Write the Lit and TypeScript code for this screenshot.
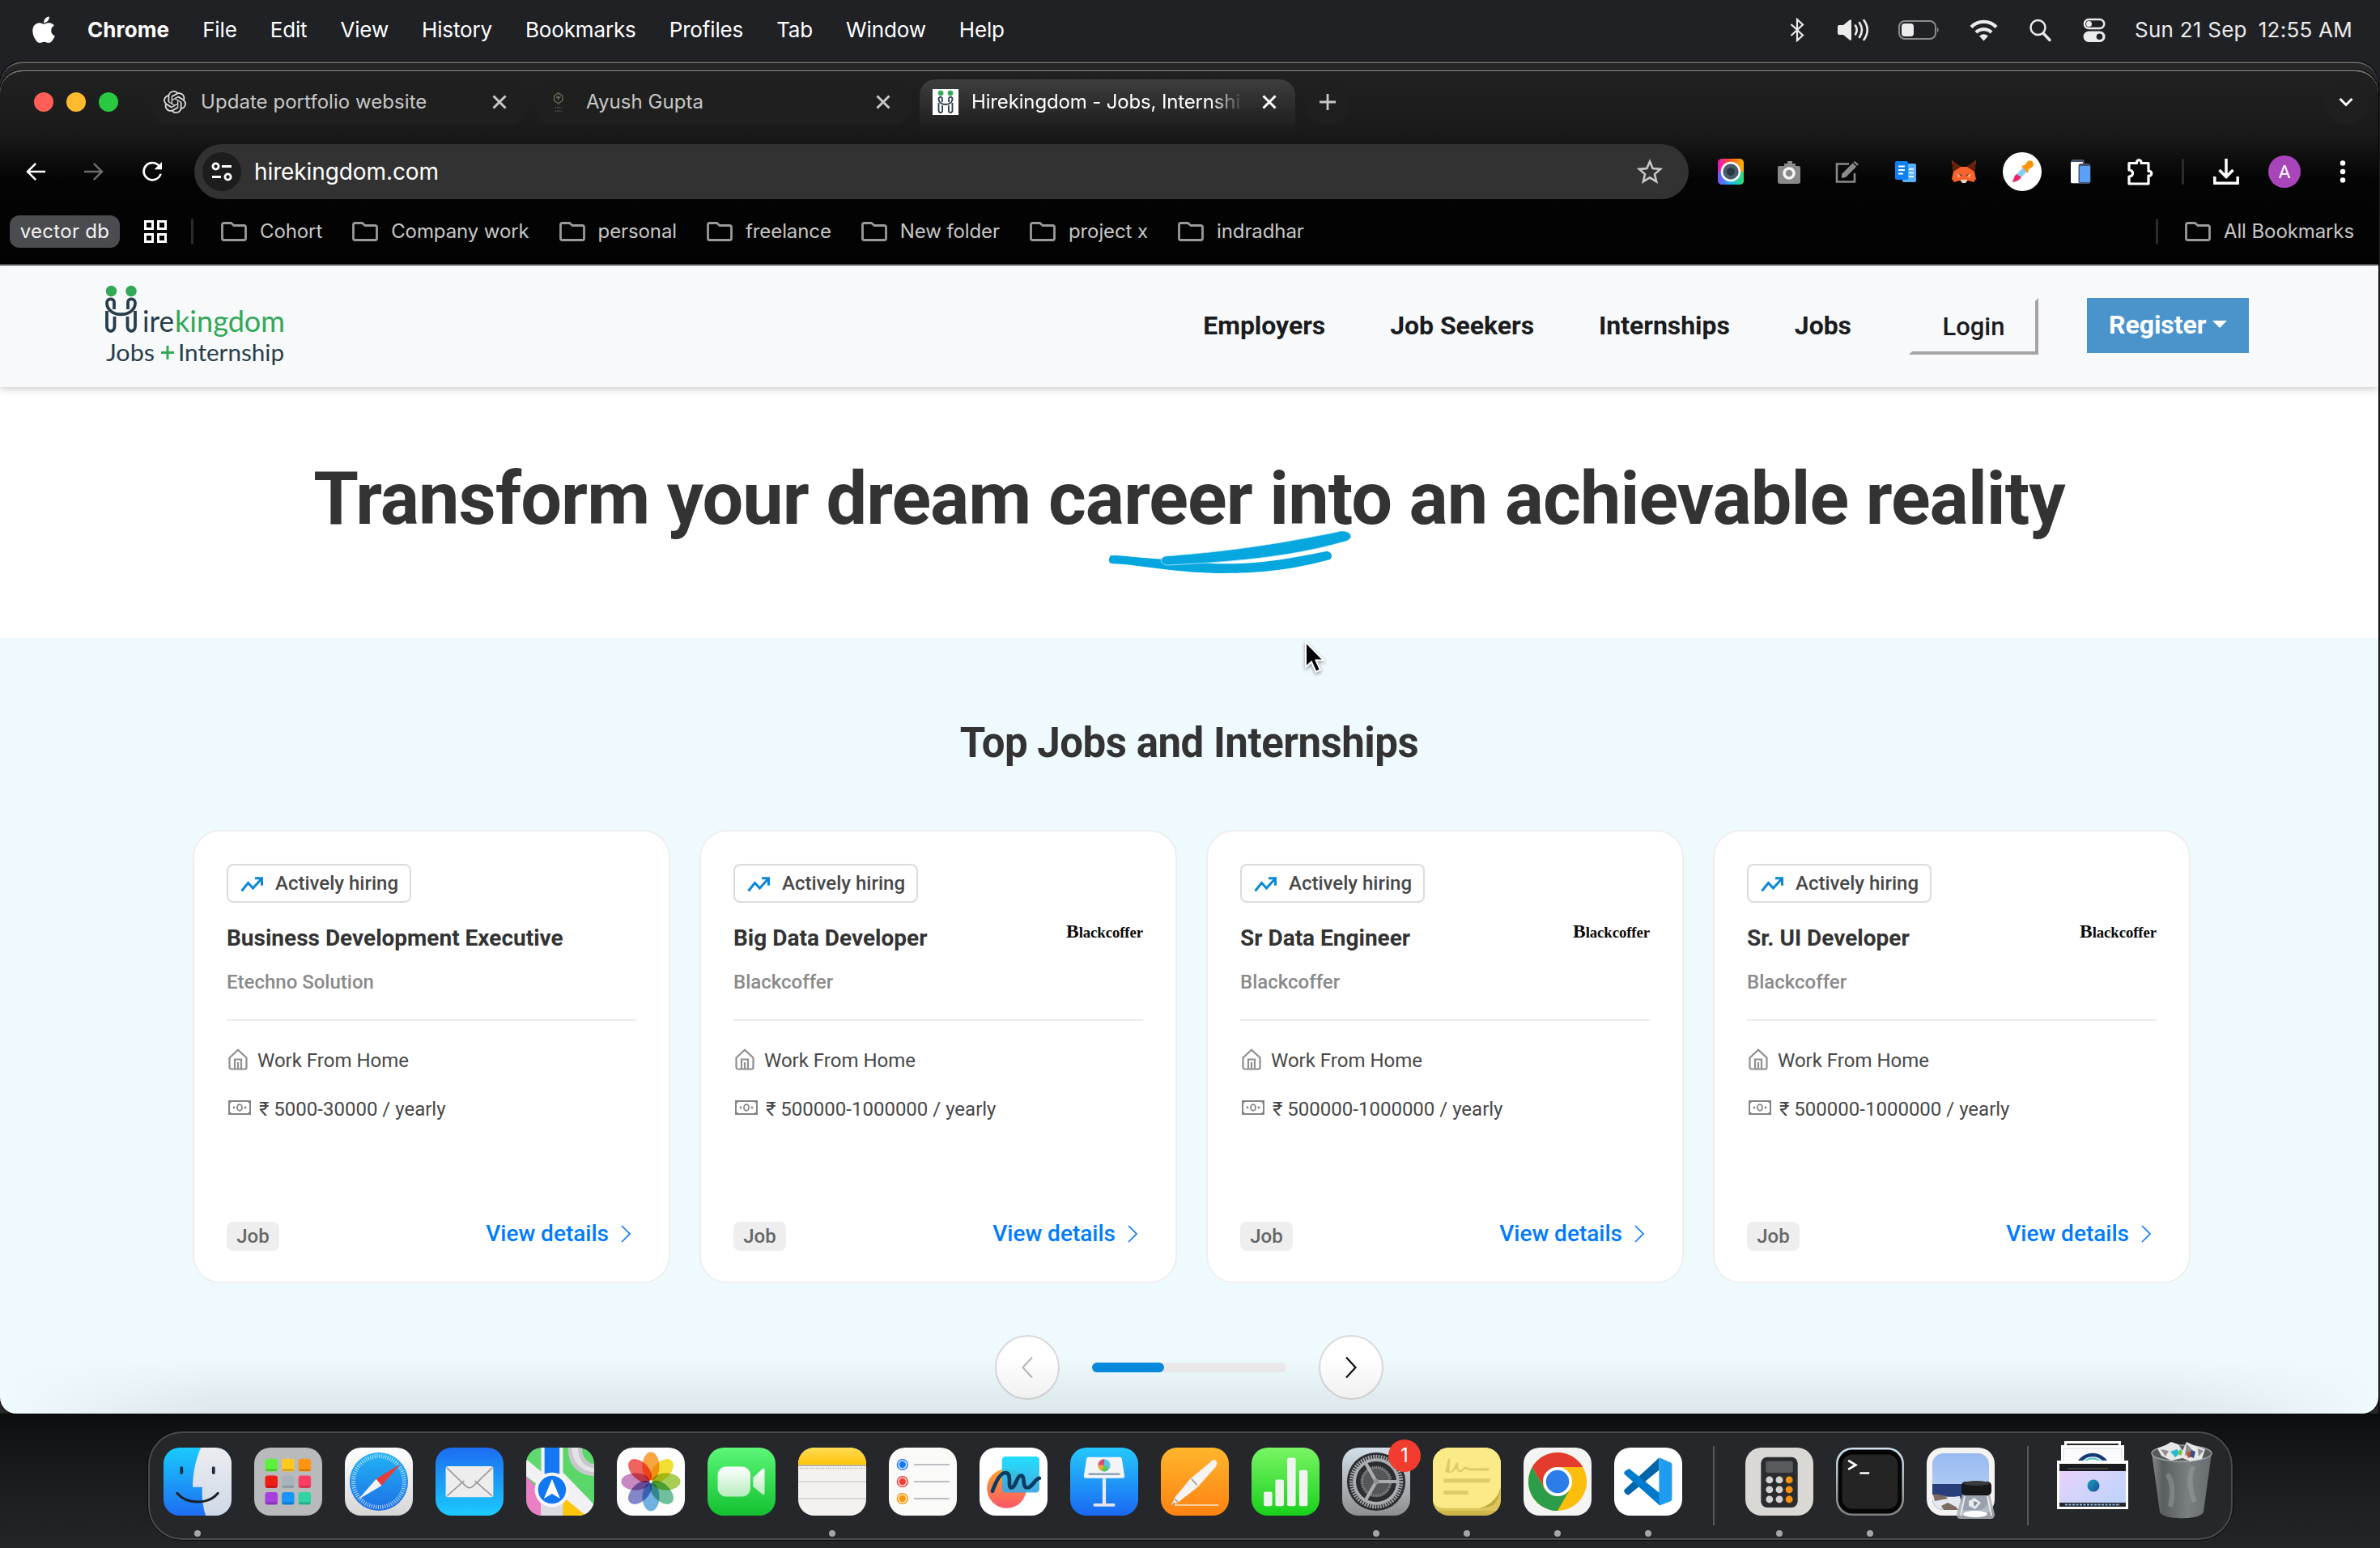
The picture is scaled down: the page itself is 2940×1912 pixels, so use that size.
import { LitElement, html, svg, css, nothing } from "lit";
import { customElement, property } from "lit/decorators.js";

const folder = html`<svg class="folder" viewBox="0 0 32 24"><path d="M1.5 4V20.5a2 2 0 0 0 2 2h25a2 2 0 0 0 2-2V6.500a2 2 0 0 0-2-2H16L12.500 1.500h-9a2 2 0 0 0-2 2z" fill="none" stroke="#9a9a9a" stroke-width="2.800"/></svg>`;
const closeX = (c: string) => html`<svg class="close" viewBox="0 0 18 18"><path d="M1.500 1.500 16.500 16.500M16.500 1.500 1.500 16.500" stroke=${c} stroke-width="3" fill="none"/></svg>`;

const hMark = svg`
  <circle cx="7.500" cy="6.500" r="6.800" fill="#33a857"/><circle cx="32" cy="6.500" r="6.800" fill="#33a857"/>
  <g fill="none" stroke="#263e4c" stroke-width="3.800" stroke-linecap="butt">
    <path d="M11 29V20c0-5-9-5-9 1 0 19 35 19 35 0 0-6-9-6-9-1v9"/>
    <path d="M2 31v19c0 8 9.500 8 9.500 0V38M37 31v19c0 8-9.500 8-9.500 0V38"/>
  </g>`;

/* Application icons of the dock, each on a 100 x 100 grid. */
const appIcons: Record<string, unknown> = {
  finder: svg`
    <defs><linearGradient id="fi" x2="0" y2="1"><stop stop-color="#19cbfd"/><stop offset="1" stop-color="#1e6df2"/></linearGradient>
    <linearGradient id="fj" x2="0" y2="1"><stop stop-color="#ececf0"/><stop offset="1" stop-color="#cfd9e6"/></linearGradient></defs>
    <rect width="100" height="100" fill="url(#fi)"/>
    <path d="M55 0C47 18 43 38 43 58h14c-1 14 1 30 5 42h38V0z" fill="url(#fj)"/>
    <path d="M26.500 30v7M73.500 30v7" stroke="#1d2b3c" stroke-width="4.500" stroke-linecap="round"/>
    <path d="M20 67c14 17 46 17 60 0" fill="none" stroke="#1c2026" stroke-width="3.500" stroke-linecap="round"/>`,
  launchpad: svg`
    <rect width="100" height="100" fill="#b9babc"/>
    ${[["#5df03f", "#ffc91f", "#ff9511"], ["#ee1d16", "#a8b4bb", "#ff3e66"], ["#a840dd", "#1896fb", "#2fd3a4"]].map((r, j) =>
      r.map((c, i) => svg`<rect x=${16 + i * 24.500} y=${16.500 + j * 24.500} width="18.500" height="18.500" rx="4" fill=${c}/>
      <path d="M${17 + i * 24.500} ${33 + j * 24.500}h16.500" stroke="#000" stroke-opacity=".18" stroke-width="3"/>`))}`,
  safari: svg`
    <defs><linearGradient id="sa" x2="0" y2="1"><stop stop-color="#22b4f5"/><stop offset="1" stop-color="#1d70e6"/></linearGradient>
    <linearGradient id="sb" x2="0" y2="1"><stop stop-color="#fff"/><stop offset="1" stop-color="#d6d6d6"/></linearGradient></defs>
    <rect width="100" height="100" fill="url(#sb)"/><circle cx="50" cy="50" r="43" fill="url(#sa)"/>
    <circle cx="50" cy="50" r="37.500" fill="none" stroke="#fff" stroke-opacity=".75" stroke-width="6" stroke-dasharray="1.100 2.170"/>
    <path d="M82 24 54 56 46 46z" fill="#e83b36"/><path d="M20 76 46 46 54 56z" fill="#f4f4f4"/>`,
  mail: svg`
    <defs><linearGradient id="ma" x2="0" y2="1"><stop stop-color="#1d6df2"/><stop offset="1" stop-color="#1bcbfd"/></linearGradient></defs>
    <rect width="100" height="100" fill="url(#ma)"/>
    <rect x="15" y="27.500" width="70" height="45.500" rx="4" fill="#ededed"/>
    <path d="M17 71 42 49M83 71 58 49M16.500 29.500 44 56c4 4 8 4 12 0L83.500 29.500" fill="none" stroke="#9b9b9b" stroke-width="2"/>`,
  maps: svg`
    <rect width="100" height="100" fill="#5bd769"/>
    <path d="M0 0h26v45L0 16z" fill="#5fd96f"/><path d="M62 0c-2 24 14 42 40 42V24C90 24 82 14 82 0z" fill="#c8c8cc"/>
    <path d="M67 0c0 20 14 36 35 36V30C86 30 76 18 76 0z" fill="#e4e4e8"/>
    <path d="M0 17 100 100H76L0 42z" fill="#f1f1f3"/><path d="M50 32 104 88v14H90L48 60z" fill="#f1f1f3"/><path d="M0 42 54 100H0z" fill="#ea7fc4"/>
    <rect x="22" width="32" height="100" fill="#f1f1f3"/><rect x="22" y="70" width="32" height="30" fill="#dcdce2"/><rect x="27" width="22" height="62" fill="#1577f2"/>
    <path d="M54 72v28H88z" fill="#fdc60b"/>
    <circle cx="38" cy="62" r="25.500" fill="#f6f6fa"/><circle cx="38" cy="62" r="20.500" fill="#1277f3"/>
    <path d="M38 46 50 75 38 68 26 75z" fill="#fff"/>`,
  photos: svg`
    <rect width="100" height="100" fill="#fdfdfd"/>
    ${["#f99a2a", "#f4dc17", "#9fc93c", "#5db98f", "#5ba8e0", "#7478c2", "#c07abb", "#f0504a"].map((c, i) =>
      svg`<ellipse cx="50" cy="27.500" rx="12.500" ry="21" fill=${c} fill-opacity=".88" transform="rotate(${i * 45} 50 50)" style="mix-blend-mode:multiply"/>`)}
    <circle cx="50" cy="50" r="2" fill="#fff"/>`,
  facetime: svg`
    <defs><linearGradient id="fa" x2="0" y2="1"><stop stop-color="#5bf777"/><stop offset="1" stop-color="#12c02f"/></linearGradient>
    <linearGradient id="fb" x2="0" y2="1"><stop stop-color="#fff"/><stop offset="1" stop-color="#b6ecbd"/></linearGradient></defs>
    <rect width="100" height="100" fill="url(#fa)"/><rect x="15" y="28" width="48" height="44" rx="12" fill="url(#fb)"/>
    <path d="M67 44 81 31c2-1 3 0 3 2v34c0 2-1 3-3 2L67 57z" fill="url(#fb)"/>`,
  notes: svg`
    <defs><linearGradient id="na" x2="0" y2="1"><stop stop-color="#ffdc55"/><stop offset="1" stop-color="#fec309"/></linearGradient></defs>
    <rect width="100" height="100" fill="#f3f2ee"/><rect width="100" height="25.500" fill="url(#na)"/>
    <path d="M0 26.500h100" stroke="#aaa89e" stroke-width="2"/><path d="M2 30.500h96" stroke="#9d9d9d" stroke-width="1.500" stroke-dasharray="1.500 2"/>
    <path d="M0 50h100M0 75h100" stroke="#d2d1cd" stroke-width="2"/>`,
  reminders: svg`
    <rect width="100" height="100" fill="#fafaf8"/>
    ${["#1778f8", "#f63b31", "#fb9503"].map((c, i) => svg`<circle cx="20" cy=${25 + i * 25} r="7.500" fill="none" stroke=${c} stroke-width="1.800"/><circle cx="20" cy=${25 + i * 25} r="5" fill=${c}/>
    <path d="M37 ${25 + i * 25}h52" stroke="#bdbcc2" stroke-width="2.200"/>`)}`,
  freeform: svg`
    <defs><linearGradient id="ra" x2="0" y2="1"><stop stop-color="#fda52b"/><stop offset="1" stop-color="#fd5668"/></linearGradient>
    <linearGradient id="rb" x2="0" y2="1"><stop stop-color="#0fdcff"/><stop offset="1" stop-color="#3ba5dc"/></linearGradient></defs>
    <rect width="100" height="100" fill="#fff"/><circle cx="40" cy="60" r="29" fill="url(#ra)"/><rect x="33" y="13" width="55" height="53" rx="5" fill="url(#rb)" fill-opacity=".93"/>
    <path d="M19 64c5-14 11-27 19-27 11 0 2 22 9 22 6 0 8-18 14-18 7 0 1 18 9 18 8 0 11-13 18-14" fill="none" stroke="#0a3c63" stroke-width="5.500" stroke-linecap="round"/>`,
  keynote: svg`
    <defs><linearGradient id="ka" x2="0" y2="1"><stop stop-color="#25c8fd"/><stop offset="1" stop-color="#1a68f2"/></linearGradient></defs>
    <rect width="100" height="100" fill="url(#ka)"/><path d="M27 14h46c2 0 3 1 3 3l4 25c0 2-1 3-3 3H23c-2 0-3-1-3-3l4-25c0-2 1-3 3-3z" fill="#f3f4f6"/>
    <path d="M27 39h46" stroke="#8ba3b8" stroke-width="3"/><path d="M50 45v38" stroke="#e8edf3" stroke-width="5"/><rect x="34" y="82" width="32" height="4.500" rx="2" fill="#e2e6ec"/>
    <circle cx="50" cy="26" r="9" fill="#58c4ea"/><path d="M50 26V17a9 9 0 0 0-9 9z" fill="#e4486b"/><path d="M50 26h-9a9 9 0 0 0 6 8.500z" fill="#f5a52f"/><path d="M50 26 47 34.500A9 9 0 0 0 57 31z" fill="#54c65a"/>`,
  pages: svg`
    <defs><linearGradient id="pa" x2="0" y2="1"><stop stop-color="#ffb62c"/><stop offset="1" stop-color="#fd8213"/></linearGradient></defs>
    <rect width="100" height="100" fill="url(#pa)"/><path d="M20 84.500h65" stroke="#ffcf9a" stroke-width="2.500"/>
    <path d="M81 19c2 2 2 5 0 9L54 58 26 80 16 85 20 74 43 46 73 21c3-3 6-4 8-2z" fill="#f6f4f2"/><path d="M45 46 53 55M20 75l5 5" stroke="#a59b92" stroke-width="2"/><path d="M16 85l5-5-1 3z" fill="#444"/>`,
  numbers: svg`
    <defs><linearGradient id="nu" x2="0" y2="1"><stop stop-color="#79f564"/><stop offset="1" stop-color="#18d01b"/></linearGradient></defs>
    <rect width="100" height="100" fill="url(#nu)"/>
    ${[[18, 65], [35, 47], [52.500, 15], [70, 33]].map(([x, y]) => svg`<rect x=${x} y=${y} width="12.500" height=${86 - y} rx="2.500" fill="#f0f4ee"/>`)}`,
  settings: svg`
    <defs><linearGradient id="se" x2="0" y2="1"><stop stop-color="#d3dfe8"/><stop offset="1" stop-color="#8e8e8f"/></linearGradient></defs>
    <rect width="100" height="100" fill="url(#se)"/><circle cx="50" cy="50" r="43" fill="#2c2d30"/>
    <circle cx="50" cy="50" r="36.500" fill="none" stroke="#a3a7aa" stroke-width="6" stroke-dasharray="2.200 1.600"/>
    <circle cx="50" cy="50" r="32" fill="none" stroke="#a9adb0" stroke-width="4.500"/><circle cx="50" cy="50" r="21" fill="#55585b" stroke="#8c8f92" stroke-width="4" stroke-dasharray="1.600 1.200"/>
    <path d="M50 50h32M50 50 34 22M50 50 34 78" stroke="#a9adb0" stroke-width="5"/><circle cx="50" cy="50" r="4" fill="#909396"/>`,
  stickies: svg`
    <rect width="100" height="100" fill="#cdb54a"/><rect y="0" width="100" height="93" fill="#dcc65c"/>
    <path d="M0 0h100v58c-4 16-16 28-32 31H16C6 89 0 84 0 76z" fill="#faea88"/><path d="M100 58c-4 16-16 28-32 31 12-1 20-2 24-8 4-5 7-14 8-23z" fill="#c2a93e"/>
    <path d="M18 36c2-6 3-20 6-20 4 0-2 19 2 19s7-14 10-13c3 0-1 12 4 11s5-6 9-5c4 2 6 3 12 2h22v4H60c-8 1-10-3-13-2s-4 5-8 4-3-6-5-5-5 7-9 6z" fill="#dfcb68"/>
    <path d="M16 48.500h68M16 66h36" stroke="#dfcb68" stroke-width="6"/>`,
  chrome: svg`
    <rect width="100" height="100" fill="#f4f4f4"/>
    <circle cx="50" cy="50" r="43" fill="#fcbd0c"/>
    <path d="M12.800 28.500 31.500 61 68.600 60.700 50 93A43 43 0 0 1 12.800 28.500z" fill="#2c9d49"/>
    <path d="M87.200 28.500H50L31.400 60.700 12.800 28.500A43 43 0 0 1 87.200 28.500z" fill="#e33b2e"/>
    <circle cx="50" cy="50" r="21.500" fill="#fff"/><circle cx="50" cy="50" r="17" fill="#2b7de9"/>`,
  vscode: svg`
    <rect width="100" height="100" fill="#fff"/>
    <path d="M15 62c-1 2 0 4 2 6l4 2L66 33V15z" fill="#0065a9"/><path d="M15 39c-1-2 0-4 2-5l5-3 45 36v18z" fill="#007acc"/>
    <path d="M67 15 83 22c2 1 2 3 2 4v49c0 1 0 3-2 4L67 85c-1 0-1 0-1-1V16c0-1 0-1 1-1z" fill="#1f9cf0"/>`,
  calculator: svg`
    <rect width="100" height="100" fill="#d9d8d5"/><rect x="23" y="14" width="54" height="74" rx="9" fill="#2b2c2f"/><rect x="30" y="20" width="40" height="17" rx="3" fill="#595a5d"/>
    ${[0, 1, 2].map(j => [0, 1, 2].map(i => svg`<circle cx=${35.500 + i * 14.500} cy=${47.500 + j * 14.300} r="5.300" fill=${i === 2 ? "#fd9206" : "#d5d4d2"}/>`))}`,
  terminal: svg`
    <defs><linearGradient id="te" x2="0" y2="1"><stop stop-color="#cfe6f0"/><stop offset="1" stop-color="#7e7e7e"/></linearGradient></defs>
    <rect width="100" height="100" fill="url(#te)"/><rect x="3" y="3" width="94" height="94" rx="21" fill="#050505"/><rect x="9" y="10" width="82" height="80" rx="15" fill="#242424"/>
    <path d="M18 19 29 25.500 18 32M35 37.500h14" fill="none" stroke="#fff" stroke-width="3.200"/>`,
};

const dockApps: [string, boolean][] = [
  ["finder", true], ["launchpad", false], ["safari", false], ["mail", false], ["maps", false], ["photos", false],
  ["facetime", false], ["notes", true], ["reminders", false], ["freeform", false], ["keynote", false], ["pages", false],
  ["numbers", false], ["settings", true], ["stickies", true], ["chrome", true], ["vscode", true],
];

const previewIcon = html`<svg class="special" viewBox="0 0 84 90">
  <defs><linearGradient id="pv" x2="0" y2="1"><stop stop-color="#98b9f0"/><stop offset="1" stop-color="#bed7f6"/></linearGradient></defs>
  <rect width="84" height="84" rx="20" fill="#f4f3f1"/><rect x="7" y="7" width="70" height="70" rx="14" fill="url(#pv)"/>
  <path d="M7 45h70v18a14 14 0 0 1-14 14H21A14 14 0 0 1 7 63z" fill="#283f7c"/><path d="M7 58c12 2 18 4 34 2l4 17H21A14 14 0 0 1 7 63z" fill="#e4e8ef"/>
  <path d="M8 58c6-2 10 2 14 1l4 4-16 3zM18 72l8-4 10 5 3 4H21z" fill="#7c6c60"/>
  <path d="M44 58h34l6 24q0 6-5 6H42q-5 0-5-6z" fill="#a9afb5" fill-opacity=".88"/><path d="M47 60 42 84M75 60l5 24" stroke="#e9ecef" stroke-width="2"/>
  <ellipse cx="60" cy="82" rx="15" ry="4" fill="#fff"/><path d="m52 66 7-4 8 6-7 8-8-4z" fill="#e6e9ec"/><path d="m58 66 5 2-4 5z" fill="#7b8189"/>
  <rect x="43" y="42" width="37" height="17" rx="5" fill="#17181a"/><ellipse cx="61.500" cy="44" rx="16" ry="3" fill="#3a3b3d"/></svg>`;

const stackIcon = html`<svg class="special" viewBox="0 0 88 90">
  <defs><linearGradient id="st" x2="1" y2="1"><stop stop-color="#ecd2fb"/><stop offset="1" stop-color="#b9d4fb"/></linearGradient>
  <linearGradient id="su" x2="1" y2="1"><stop stop-color="#18a3bd"/><stop offset="1" stop-color="#1b4c95"/></linearGradient></defs>
  <rect x="9" y="1" width="70" height="40" fill="#fff"/><rect x="12" y="4" width="64" height="3" fill="#222"/>
  <rect x="5" y="6" width="78" height="45" fill="#fff"/><rect x="8" y="10" width="72" height="30" fill="#fbfbfd" stroke="#ddd"/>
  <circle cx="44" cy="38" r="20" fill="none" stroke="#173b76" stroke-width="4.500"/><circle cx="44" cy="38" r="15.500" fill="none" stroke="#56c4c4" stroke-width="2"/>
  <rect y="25" width="88" height="60" fill="#fff"/><rect x="3" y="29" width="82" height="53" fill="url(#st)"/>
  <rect x="3" y="29" width="82" height="9" fill="#1a1b1e"/><rect x="13" y="34" width="50" height="2" fill="#3d3e41"/><circle cx="45" cy="56" r="7.500" fill="url(#su)"/>
  <rect x="3" y="77" width="82" height="5" fill="#22262d"/><path d="M10 79.500h68" stroke="#8fb6dd" stroke-width="2" stroke-dasharray="3 1.500"/></svg>`;

const trashIcon = html`<svg class="special" viewBox="0 0 76 96">
  <defs><linearGradient id="tr"><stop stop-color="#8b9092"/><stop offset=".18" stop-color="#5d6264"/><stop offset=".6" stop-color="#808587"/><stop offset="1" stop-color="#6c7173"/></linearGradient></defs>
  <path d="M1 14 11 86c1 11 53 11 54 0L75 14z" fill="url(#tr)" fill-opacity=".93"/>
  <path d="M20 40q10 12 4 40M52 30q-8 20 2 44" stroke="#9da2a4" stroke-opacity=".45" stroke-width="6" fill="none"/>
  <ellipse cx="38" cy="14" rx="37" ry="10" fill="#55595b" stroke="#9ca1a3" stroke-width="1.500"/>
  <path d="M8 8 18 4 25 0l9 3 5 8 5-11 11 5 12 4-4 12-14 3-10-4-14 3-12-6z" fill="#e8e8e8"/>
  <path d="m12 9 10 2-4 7zM44 2l8 9-4 8-6-3zM58 8l7 3-6 7z" fill="#8e8f91"/><path d="m24 12 8-3 4 5-6 5z" fill="#2bb9cf"/><path d="m36 9 3 3-2 5-4-3z" fill="#65c84a"/><path d="m44 13 8-2 2 5-8 4z" fill="#bf5631"/><path d="m50 10 5 2-2 8-5-2z" fill="#3b4d83"/></svg>`;

interface Job { title: string; company: string; pay: string; logo: boolean }

@customElement("job-card")
class JobCard extends LitElement {
  @property({ attribute: false }) job!: Job;
  static styles = css`
    :host { display: flex; flex-direction: column; box-sizing: border-box; width: 590px; height: 560px; border: 2px solid #eee; border-radius: 34px; background: #fff; padding: 40px; font-family: Roboto, sans-serif; font-size: 24px; color: #484848; }
    .tag { display: flex; align-items: center; box-sizing: border-box; width: 228px; height: 48px; border: 2px solid #dcdcdc; border-radius: 8px; padding-left: 15px; gap: 15px; font-weight: 500; line-height: 44px; white-space: nowrap; }
    .trend { width: 28px; height: 19px; margin-top: 3px; }
    .head { display: flex; justify-content: space-between; margin-top: 25px; height: 119px; }
    .title { font-size: 28px; line-height: 36px; font-weight: 700; color: #333; margin-top: 1px; }
    .company { font-weight: 500; line-height: 30px; margin-top: 21px; color: #8a8a8a; }
    .brand { font: bold 18.800px/24px "Liberation Serif", serif; color: #0a0a0a; letter-spacing: -.1px; margin-top: -2px; }
    .initial { font-size: 23.500px; }
    .rule { height: 2px; background: #ececec; }
    .row { display: flex; align-items: center; height: 30px; line-height: 30px; }
    .place { margin-top: 34px; }
    .pay { margin-top: 30px; }
    .house { width: 24px; height: 27px; margin: 0 12px 3px 2px; }
    .cash { width: 28px; height: 18px; margin: 0 10px 4px 2px; }
    .foot { display: flex; justify-content: space-between; align-items: center; margin: auto 0 -2px; }
    .kind { width: 65px; height: 36px; line-height: 36px; border-radius: 8px; background: #eee; color: #666; font-weight: 500; text-align: center; }
    .more { display: flex; align-items: center; gap: 15px; margin-right: 7px; margin-top: -7px; font-size: 28px; line-height: 30px; font-weight: 500; color: #007bff; }
    .next { width: 12px; height: 22px; }
  `;
  render() {
    const j = this.job;
    return html`
      <div class="tag"><svg class="trend" viewBox="0 0 28 19"><path d="M1.500 17.500 9.500 7.500l6 6.500L26 2.500M18 1.800h8.500v9" fill="none" stroke="#0a88da" stroke-width="3"/></svg>Actively hiring</div>
      <div class="head"><div><div class="title">${j.title}</div><div class="company">${j.company}</div></div>
        ${j.logo ? html`<div class="brand"><span class="initial">B</span>lackcoffer</div>` : nothing}</div>
      <div class="rule"></div>
      <div class="row place"><svg class="house" viewBox="0 0 24 27"><path d="M1.500 11.500 12 1.800l10.500 9.700V23a2.500 2.500 0 0 1-2.500 2.500H4A2.500 2.500 0 0 1 1.500 23zM8 25V13.500h8V25M12 17v8" fill="none" stroke="#8f8f8f" stroke-width="2.200"/></svg>Work From Home</div>
      <div class="row pay"><svg class="cash" viewBox="0 0 28 18"><rect x="1" y="1" width="26" height="16" fill="none" stroke="#858585" stroke-width="2"/><path d="M1 1h4L1 5zM27 1h-4l4 4zM1 17v-4l4 4zM27 17h-4l4-4z" fill="#858585"/><ellipse cx="14" cy="9" rx="3" ry="3.800" fill="none" stroke="#858585" stroke-width="1.800"/><circle cx="7" cy="9" r="1.400" fill="#858585"/><circle cx="21" cy="9" r="1.400" fill="#858585"/></svg>${j.pay}</div>
      <div class="foot"><div class="kind">Job</div><div class="more">View details<svg class="next" viewBox="0 0 12 22"><path d="M1 1 11 11 1 21" fill="none" stroke="#007bff" stroke-width="1.600"/></svg></div></div>`;
  }
}

const jobs: Job[] = [
  { title: "Business Development Executive", company: "Etechno Solution", pay: "₹ 5000-30000 / yearly", logo: false },
  { title: "Big Data Developer", company: "Blackcoffer", pay: "₹ 500000-1000000 / yearly", logo: true },
  { title: "Sr Data Engineer", company: "Blackcoffer", pay: "₹ 500000-1000000 / yearly", logo: true },
  { title: "Sr. UI Developer", company: "Blackcoffer", pay: "₹ 500000-1000000 / yearly", logo: true },
];

@customElement("menu-bar")
class MenuBar extends LitElement {
  static styles = css`
    :host { display: flex; align-items: center; box-sizing: border-box; height: 76px; padding: 0 34px 3px 40px; font: 26px/36px Inter, sans-serif; color: #fff; background: #202125; letter-spacing: -.15px; }
    .apple { width: 28px; height: 36px; margin-right: 40px; }
    .items { display: flex; gap: 41px; }
    .app { font-weight: 700; letter-spacing: .1px; }
    .status { display: flex; align-items: center; gap: 36px; margin-left: auto; color: #ebebec; }
    .status svg { height: 30px; display: block; }
    .clock { display: flex; justify-content: space-between; width: 269px; white-space: nowrap; letter-spacing: .25px; }
    .w26 { width: 26px; } .w28 { width: 28px; } .w30 { width: 30px; } .w38 { width: 38px; } .w40 { width: 40px; } .w52 { width: 52px; }
  `;
  render() {
    return html`
      <svg class="apple" viewBox="0 20 384 480"><path fill="#fff" d="M318.7 268.7c-.2-36.7 16.4-64.4 50-84.8-18.8-26.900-47.200-41.700-84.700-44.600-35.500-2.800-74.300 20.700-88.500 20.700-15 0-49.400-19.700-76.400-19.700C63.300 141.200 4 184.800 4 273.500q0 39.300 14.400 81.200c12.800 36.700 59 126.700 107.200 125.200 25.200-.6 43-17.900 75.800-17.900 31.800 0 48.300 17.900 76.400 17.900 48.600-.7 90.400-82.500 102.600-119.300-65.200-30.700-61.700-90-61.700-91.900zm-56.600-164.200c27.300-32.400 24.800-61.900 24-72.500-24.100 1.400-52 16.400-67.900 34.900-17.500 19.800-27.800 44.300-25.600 71.900 26.100 2 49.900-11.400 69.500-34.300z"/></svg>
      <div class="items"><span class="app">Chrome</span>${["File", "Edit", "View", "History", "Bookmarks", "Profiles", "Tab", "Window", "Help"].map(m => html`<span>${m}</span>`)}</div>
      <div class="status">
        <svg class="w26" viewBox="0 0 26 30"><path d="M5.500 8 20 21.500 13 28V2l7 6.500L5.500 22" fill="none" stroke="#ebebec" stroke-width="2.200"/></svg>
        <svg class="w40" viewBox="0 0 40 30"><path d="M1 11q0-2 2-2h5l8-6.500q2-1 2 1v23q0 2-2 1L8 21H3q-2 0-2-2z" fill="#ebebec"/><path d="M23 9.500q3.500 5.500 0 11M28 6q6 9 0 18M33.500 3q8.500 12 0 24" fill="none" stroke="#ebebec" stroke-width="2.600" stroke-linecap="round"/></svg>
        <svg class="w52" viewBox="0 0 52 30"><rect x="1" y="4" width="45" height="22" rx="7" fill="none" stroke="#8a8b8d" stroke-width="2"/><rect x="4" y="7" width="15" height="16" rx="4" fill="#ebebec"/><path d="M48 11.500q3.500 3.500 0 7z" fill="#8a8b8d"/></svg>
        <svg class="w38" viewBox="0 0 38 30"><g fill="none" stroke="#ebebec" stroke-width="4.300"><path d="M2 11.500a21.500 21.500 0 0 1 31 0M8 18a13.500 13.500 0 0 1 19 0"/></g><path d="M12 22.500q5.500-4.500 11 0L17.500 28.500z" fill="#ebebec"/></svg>
        <svg class="w30" viewBox="0 0 30 30"><circle cx="10.500" cy="12" r="9" fill="none" stroke="#ebebec" stroke-width="2.500"/><path d="m17 19 8 8.500" stroke="#ebebec" stroke-width="3.400" stroke-linecap="round"/></svg>
        <svg class="w28" viewBox="0 0 28 30"><rect x="1.800" y="2" width="24.500" height="11" rx="5.500" fill="none" stroke="#ebebec" stroke-width="2.400"/><circle cx="7.500" cy="7.500" r="3.500" fill="#ebebec"/><rect x=".6" y="16.500" width="27" height="13.500" rx="6.700" fill="#ebebec"/><circle cx="20.500" cy="23.200" r="3.800" fill="#202125"/></svg>
        <div class="clock"><span>Sun 21 Sep</span><span>12:55 AM</span></div>
      </div>`;
  }
}

@customElement("browser-chrome")
class BrowserChrome extends LitElement {
  static styles = css`
    :host { display: block; height: 239px; background: linear-gradient(#212121 0, #1c1c1c 60px, #1a1a1a 78px, #040404 135px, #030303); border-bottom: 2px solid #555; font: 24px/30px Inter, sans-serif; color: #c7c7c7; letter-spacing: -.1px; }
    svg { display: block; flex: none; }
    .tabs { display: flex; align-items: flex-start; height: 78px; padding: 11px 12px 0 42px; box-sizing: border-box; }
    .lights { display: flex; gap: 16px; padding-top: 16px; margin-right: 41px; }
    .light { width: 24px; height: 24px; border-radius: 50%; }
    .red { background: #ff5f57; } .amber { background: #febb2e; } .green { background: #28c840; }
    .tab { display: flex; align-items: center; box-sizing: border-box; width: 464px; height: 56px; border-radius: 20px; background: #1f1f1f; padding: 0 25px 0 15px; margin-right: 10px; letter-spacing: .05px; }
    .label { flex: 1; white-space: nowrap; overflow: hidden; }
    .close { width: 18px; height: 18px; }
    .icon { width: 28px; height: 28px; margin-right: 18px; }
    .ghost { margin-right: 24px; width: 24px; }
    .active { color: #fff; height: 64px; padding-bottom: 8px; border-radius: 20px 20px 0 0; background: linear-gradient(#3e3e3e, #1b1b1b); margin: 0 12px 0 1px; padding: 0 23px 8px 16px; letter-spacing: -.15px; }
    .active .label { margin-right: 22px; -webkit-mask-image: linear-gradient(90deg, #000 calc(100% - 42px), transparent); }
    .fav { width: 32px; height: 32px; background: #fff; margin-right: 16px; }
    .plus { width: 56px; height: 56px; display: grid; place-items: center; border-radius: 28px; background: #1f1f1f; }
    .plus svg { width: 20px; height: 20px; }
    .search { margin-left: auto; }
    .tools { display: flex; align-items: center; height: 92px; padding-left: 8px; box-sizing: border-box; margin-top: 1px; }
    .cell { width: 72px; display: grid; place-items: center; }
    .cell svg { width: 32px; height: 32px; }
    .cell .puzzle { width: 34px; height: 36px; margin-left: 3px; }
    .omni { display: flex; align-items: center; width: 1846px; height: 68px; box-sizing: border-box; border-radius: 34px; background: #323232; margin: 0 16px; padding: 0 32px 0 10px; color: #fff; font-size: 28px; }
    .info { width: 48px; height: 48px; border-radius: 50%; background: #1d1d1d; display: grid; place-items: center; margin-right: 16px; }
    .info svg { width: 26px; height: 24px; }
    .star { width: 32px; height: 32px; margin-left: auto; }
    .sep { width: 36px; display: grid; place-items: center; }
    .bar { width: 3px; height: 32px; border-radius: 2px; background: #2c2c2c; }
    .avatar { width: 40px; height: 40px; border-radius: 50%; background: #a945bb; color: #fff; font-size: 22px; line-height: 40px; text-align: center; }
    .white { width: 48px; height: 48px; border-radius: 50%; background: #fff; display: grid; place-items: center; }
    .marks { display: flex; align-items: center; height: 56px; padding: 0 30px 0 12px; }
    .chip { width: 136px; height: 40px; line-height: 40px; border-radius: 12px; background: #4b4c4f; color: #f4f4f4; text-align: center; letter-spacing: .3px; }
    .grid { width: 30px; height: 28px; margin: 0 29px 0 29px; }
    .folder { width: 32px; height: 24px; }
    .mark { display: flex; align-items: center; gap: 16px; margin-right: 37px; white-space: nowrap; }
    .first { margin-left: 34px; }
    .all { margin: 0 0 0 33px; }
    .push { margin-left: auto; }
  `;
  render() {
    return html`
      <div class="tabs">
        <div class="lights"><div class="light red"></div><div class="light amber"></div><div class="light green"></div></div>
        <div class="tab"><svg class="icon" viewBox="0 0 24 24"><path fill="#d8d8d8" d="M22.2819 9.8211a5.9847 5.9847 0 0 0-.5157-4.9108 6.0462 6.0462 0 0 0-6.5098-2.9A6.0651 6.0651 0 0 0 4.9807 4.1818a5.9847 5.9847 0 0 0-3.9977 2.9 6.0462 6.0462 0 0 0 .7427 7.0966 5.98 5.98 0 0 0 .511 4.9107 6.051 6.051 0 0 0 6.5146 2.9001A5.9847 5.9847 0 0 0 13.2599 24a6.0557 6.0557 0 0 0 5.7718-4.2058 5.9894 5.9894 0 0 0 3.9977-2.9001 6.0557 6.0557 0 0 0-.7475-7.0729zm-9.022 12.6081a4.4755 4.4755 0 0 1-2.8764-1.0408l.1419-.0804 4.7783-2.7582a.7948.7948 0 0 0 .3927-.6813v-6.7369l2.02 1.1686a.071.071 0 0 1 .038.052v5.5826a4.504 4.504 0 0 1-4.4945 4.4944zm-9.6607-4.1254a4.4708 4.4708 0 0 1-.5346-3.0137l.142.0852 4.783 2.7582a.7712.7712 0 0 0 .7806 0l5.8428-3.3685v2.3324a.0804.0804 0 0 1-.0332.0615L9.74 19.9502a4.4992 4.4992 0 0 1-6.1408-1.6464zM2.3408 7.8956a4.485 4.485 0 0 1 2.3655-1.9728V11.6a.7664.7664 0 0 0 .3879.6765l5.8144 3.3543-2.0201 1.1685a.0757.0757 0 0 1-.071 0l-4.8303-2.7865A4.504 4.504 0 0 1 2.3408 7.872zm16.5963 3.8558L13.1038 8.364 15.1192 7.2a.0757.0757 0 0 1 .071 0l4.8303 2.7913a4.4944 4.4944 0 0 1-.6765 8.1042v-5.6772a.79.79 0 0 0-.407-.667zm2.0107-3.0231l-.142-.0852-4.7735-2.7818a.7759.7759 0 0 0-.7854 0L9.409 9.2297V6.8974a.0662.0662 0 0 1 .0284-.0615l4.8303-2.7866a4.4992 4.4992 0 0 1 6.6802 4.66zM8.3065 12.863l-2.02-1.1638a.0804.0804 0 0 1-.038-.0567V6.0742a4.4992 4.4992 0 0 1 7.3757-3.4537l-.142.0805L8.704 5.459a.7948.7948 0 0 0-.3927.6813zm1.0976-2.3654l2.602-1.4998 2.6069 1.4998v2.9994l-2.5974 1.4997-2.6067-1.4997Z"/></svg><span class="label">Update portfolio website</span>${closeX("#c7c7c7")}</div>
        <div class="tab"><svg class="icon ghost" viewBox="0 0 28 32"><path d="m16 3 6 4v7l-6 4-6-4V7zM16 7v6M13 8l3 3 3-3M16 18v2" fill="none" stroke="#6a6a55" stroke-width="1.600"/><path d="M11 24h10M11 29h10" stroke="#4a4a3e" stroke-width="2" stroke-dasharray="2 1"/></svg><span class="label">Ayush Gupta</span>${closeX("#c7c7c7")}</div>
        <div class="tab active"><svg class="fav" viewBox="-7 -4 53 66">${hMark}</svg><span class="label">Hirekingdom - Jobs, Internshi</span>${closeX("#fff")}</div>
        <div class="plus"><svg viewBox="0 0 20 20"><path d="M10 0v20M0 10h20" stroke="#c7c7c7" stroke-width="2.800"/></svg></div>
        <div class="plus search"><svg viewBox="0 0 20 20"><path d="m2.500 6 7.500 7.500L17.500 6" fill="none" stroke="#fff" stroke-width="3"/></svg></div>
      </div>
      <div class="tools">
        <div class="cell"><svg viewBox="0 0 24 24"><path fill="#fff" d="M21 11.100H6.800l6-6L11.500 3.700l-8.300 8.300 8.300 8.300 1.300-1.400-6-6H21z"/></svg></div>
        <div class="cell"><svg viewBox="0 0 24 24"><path fill="#6c6c6c" d="M3 11.100h14.200l-6-6 1.300-1.400 8.300 8.300-8.300 8.300-1.300-1.400 6-6H3z"/></svg></div>
        <div class="cell"><svg viewBox="0 0 24 24"><path fill="#fff" d="M18.600 5.400A9 9 0 1 0 20.900 14h-2a7 7 0 1 1-1.700-7.200L14 10h7V3z"/></svg></div>
        <div class="omni"><div class="info"><svg viewBox="0 0 26 24"><g fill="none" stroke="#fff" stroke-width="2.800"><circle cx="5.500" cy="5.500" r="3.600"/><path d="M13 5.500h12M1 18.500h11"/><circle cx="20.500" cy="18.500" r="3.600"/></g></svg></div>hirekingdom.com
          <svg class="star" viewBox="0 0 32 32"><path d="m16 3.500 3.700 8.600 9.300.8-7 6.200 2.100 9.100-8.100-4.900-8.100 4.900 2.100-9.100-7-6.200 9.300-.8z" fill="none" stroke="#c7c7c7" stroke-width="2.600"/></svg></div>
        <div class="cell"><svg viewBox="0 0 32 32"><defs><linearGradient id="r1"><stop stop-color="#e912c6"/><stop offset=".5" stop-color="#ff5a1f"/><stop offset="1" stop-color="#ffb400"/></linearGradient><linearGradient id="r2"><stop stop-color="#7a4dff"/><stop offset=".5" stop-color="#18b9f2"/><stop offset="1" stop-color="#2fe06c"/></linearGradient></defs><rect width="32" height="32" rx="5" fill="url(#r1)"/><path d="M0 16h32v11a5 5 0 0 1-5 5H5a5 5 0 0 1-5-5z" fill="url(#r2)"/><circle cx="16" cy="16" r="11" fill="#4b5d69" stroke="#fff" stroke-width="2.600"/><circle cx="16" cy="16" r="5" fill="#263845"/></svg></div>
        <div class="cell"><svg viewBox="0 0 32 32"><path d="M4 9q-2 0-2 2v17q0 3 3 3h22q3 0 3-3V11q0-2-2-2h-4V6h-4V3h-6v3h-4v3z" fill="#8a8a8a"/><circle cx="16" cy="18" r="6" fill="#8a8a8a" stroke="#f4f4f4" stroke-width="3.500"/></svg></div>
        <div class="cell"><svg viewBox="0 0 32 32"><path d="M18 6.500H3v22h22V18" fill="none" stroke="#8a8a8a" stroke-width="2.600"/><path d="M9 24v-5L25 3l5 4L14 23z" fill="#8a8a8a"/><path d="m23 5 5 4.500" stroke="#050505" stroke-width="1.500"/></svg></div>
        <div class="cell"><svg viewBox="0 0 32 32"><rect x="12" y="6" width="17" height="23" rx="2" fill="#58b1fa"/><path d="M20 13h6M20 17.500h6M20 22h6" stroke="#e6f4ff" stroke-width="1.800"/><rect x="3" y="3" width="16" height="23" rx="2" fill="#0f80ef"/><path d="M7 9.500h8M7 14h8M7 18.500h6" stroke="#fff" stroke-width="1.800"/></svg></div>
        <div class="cell"><svg viewBox="0 0 32 32"><path d="m1 2 11 8h8L31 2l-2 14 2 9-3 4-7-2-3 3h-4l-3-3-7 2-3-4 2-9z" fill="#f5622b"/><path d="m1 2 11 8-6 4-3 2zM31 2l-11 8 6 4 3 2z" fill="#641f08"/><path d="m6 18 7 3-4 3zM26 18l-7 3 4 3z" fill="#ff9a6c"/><path d="m10 19 3 1v2zM22 19l-3 1v2z" fill="#222"/><path d="M12 26h8l-2 4h-4z" fill="#d9d9d9"/></svg></div>
        <div class="cell"><div class="white"><svg viewBox="0 0 32 32"><path d="M17 11 7 21q-2 3-3 8 6-1 8-3l10-10z" fill="#8cccf7"/><path d="m7 21-3 8q6-1 8-3l3-3-6-4z" fill="#f02569"/><path d="m15 9 4-1 4-5q4-2 6 1t0 6l-5 3-1 5z" fill="#fd9307"/></svg></div></div>
        <div class="cell"><svg viewBox="0 0 32 32"><rect x="4" y="1" width="17" height="30" rx="3" fill="#46516b"/><rect x="4" y="4" width="15" height="26" rx="1" fill="#fff"/><rect x="13.500" y="6" width="15" height="25" rx="3" fill="#46516b"/><rect x="15" y="9" width="13" height="20" rx="1" fill="#5ba0f8"/></svg></div>
        <div class="cell"><svg class="puzzle" viewBox="0 0 34 36"><path d="M3 7.500h9.500c-1-5 6.500-5 5.500 0h9v10c5-1 5 6.500 0 5.500V33H3v-9c6-.5 6-7.500 0-8z" fill="none" stroke="#fff" stroke-width="3.200" stroke-linejoin="round"/></svg></div>
        <div class="sep"><div class="bar"></div></div>
        <div class="cell"><svg viewBox="0 0 32 32"><path d="M16 0v22M7.500 14l8.500 8.500L24.500 14M1.800 22v8.300h28.400V22" fill="none" stroke="#fff" stroke-width="3.500"/></svg></div>
        <div class="cell"><div class="avatar">A</div></div>
        <div class="cell"><svg viewBox="0 0 32 32"><circle cx="16" cy="5.500" r="3.200" fill="#fff"/><circle cx="16" cy="16" r="3.200" fill="#fff"/><circle cx="16" cy="26.500" r="3.200" fill="#fff"/></svg></div>
      </div>
      <div class="marks">
        <div class="chip">vector db</div>
        <svg class="grid" viewBox="0 0 30 28"><g fill="none" stroke="#fff" stroke-width="3"><rect x="2.500" y="1.500" width="9" height="9"/><rect x="18.500" y="1.500" width="9" height="9"/><rect x="2.500" y="17.500" width="9" height="9"/><rect x="18.500" y="17.500" width="9" height="9"/></g></svg>
        <div class="bar"></div>
        ${["Cohort", "Company work", "personal", "freelance", "New folder", "project x", "indradhar"].map((m, i) => html`<div class="mark ${i ? "" : "first"}">${folder}<span>${m}</span></div>`)}
        <div class="bar push"></div>
        <div class="mark all">${folder}<span>All Bookmarks</span></div>
      </div>`;
  }
}

@customElement("mac-dock")
class MacDock extends LitElement {
  static styles = css`
    :host { display: flex; box-sizing: border-box; width: 2575px; height: 134px; margin: 22px 0 0 183px; border: 2px solid #4b4b4d; border-radius: 42px; background: #25272b; box-shadow: 0 0 0 1px #0a0a0a; padding: 18px 18px 0 17px; }
    .slot { width: 84px; margin-right: 28px; display: flex; flex-direction: column; align-items: center; position: relative; }
    .art { display: block; width: 84px; height: 84px; border-radius: 20px; isolation: isolate; }
    .dot { width: 8px; height: 8px; border-radius: 50%; background: #a5a6a8; margin-top: 18px; }
    .line { width: 2px; height: 98px; background: #57585b; margin-top: -2px; }
    .l1 { margin-right: 38px; margin-left: 10px; } .l2 { margin: -2px 35px 0 12px; }
    .special { display: block; flex: none; overflow: visible; }
    .photo .special { width: 84px; height: 90px; }
    .stack { width: 88px; margin-right: 28px; margin-top: -9px; } .stack .special { width: 88px; height: 90px; }
    .trash { width: 76px; margin: -7px 0 0; } .trash .special { width: 76px; height: 96px; }
    .count { position: absolute; left: 57px; top: -10px; width: 40px; height: 40px; border-radius: 50%; background: #f23c30; color: #fff; font: 24px/40px Inter, sans-serif; text-align: center; }
  `;
  app(name: string, open: boolean) {
    return html`<div class="slot"><svg class="art" viewBox="0 0 100 100">${appIcons[name]}</svg>${name === "settings" ? html`<div class="count">1</div>` : nothing}${open ? html`<div class="dot"></div>` : nothing}</div>`;
  }
  render() {
    return html`${dockApps.map(([n, o]) => this.app(n, o))}
      <div class="line l1"></div>${this.app("calculator", true)}${this.app("terminal", true)}
      <div class="slot photo">${previewIcon}</div><div class="line l2"></div>
      <div class="slot stack">${stackIcon}</div><div class="slot trash">${trashIcon}</div>`;
  }
}

@customElement("app-root")
class AppRoot extends LitElement {
  static styles = css`
    :host { display: block; position: relative; width: 2940px; height: 1912px; overflow: hidden; background: linear-gradient(#202125 0, #202125 1740px, #0b0c0d 1748px, #121315 1770px, #1c1d20 1840px, #242529 1912px); }
    .behind { border-top: 2px solid #616161; border-radius: 28px 28px 0 0; background: #272727; padding-top: 8px; box-shadow: 0 0 0 1px #050505; margin-right: 2px; }
    .window { position: relative; height: 1658px; border-top: 2px solid #676767; border-radius: 28px 28px 20px 20px; overflow: hidden; background: #effaff; box-shadow: 0 0 0 1px #050505; }
    browser-chrome { margin-top: -1px; }
    .site { font-family: Roboto, sans-serif; color: #333; }
    .top { display: flex; align-items: center; box-sizing: border-box; height: 150px; padding: 0 160px 0 130px; background: #f8f9fb; box-shadow: 0 2px 10px rgba(0,0,0,.22); position: relative; color: #1b1c1e; font-size: 32px; font-weight: 700; letter-spacing: -.05px; line-height: 40px; }
    .logo { width: 224px; height: 102px; overflow: visible; margin-top: 2px; letter-spacing: 0; }
    .name { font: 37px Lato, sans-serif; fill: #263e4c; }
    .green { fill: #33a857; }
    .small { font-size: 29px; }
    .nav { display: flex; align-items: center; margin: -2px 0 0 auto; }
    .link { margin-right: 80px; }
    .login { box-sizing: border-box; width: 160px; height: 70px; margin: 2px 60px 0 -9px; border: 4px solid #f8f9fb; border-right-color: #a5a5a5; border-bottom-color: #a5a5a5; text-align: center; font-size: 31px; line-height: 64px; font-weight: 500; }
    .register { box-sizing: border-box; width: 200px; height: 68px; background: #4a93cb; color: #fff; line-height: 67px; padding-left: 27px; display: flex; }
    .caret { width: 18px; height: 9px; margin: 28px 0 0 8px; }
    .hero { height: 310px; background: #fff; text-align: center; }
    .headline { margin: 0; padding-top: 79px; font-size: 90px; line-height: 120px; font-weight: 700; letter-spacing: -.900px; white-space: nowrap; }
    .swash { display: block; width: 300px; height: 52px; margin: -21px 0 0 1369px; }
    .section { margin: 0; padding-top: 98px; text-align: center; font-size: 51px; line-height: 64px; font-weight: 700; letter-spacing: -.5px; }
    .cards { display: flex; gap: 36px; margin: 75px 0 0 238px; }
    .pager { display: flex; align-items: center; justify-content: center; gap: 40px; margin-top: 64px; }
    .round { box-sizing: border-box; width: 80px; height: 80px; border: 2px solid #dadada; border-radius: 50%; background: #fff; display: grid; place-items: center; }
    .round svg { width: 14px; height: 28px; }
    .track { width: 240px; height: 12px; border-radius: 6px; background: #ececec; }
    .fill { width: 89px; height: 12px; border-radius: 6px; background: #078bdf; }
    .shade { position: absolute; left: 0; right: 0; bottom: 0; height: 70px; background: linear-gradient(transparent, rgba(0,0,0,.08)); -webkit-mask-image: linear-gradient(90deg, transparent, #000 9%, #000 91%, transparent); }
    .cursor { position: absolute; left: 1610px; top: 791px; width: 26px; height: 42px; filter: drop-shadow(0 2px 2px rgba(0,0,0,.4)); }
  `;
  render() {
    return html`
      <menu-bar></menu-bar>
      <div class="behind"><div class="window">
        <browser-chrome></browser-chrome>
        <div class="site">
          <div class="top">
            <svg class="logo" viewBox="0 0 224 102"><g>${hMark}</g>
              <text class="name" x="46" y="57" textLength="39" lengthAdjust="spacingAndGlyphs">ire</text><text class="name green" x="86" y="57" textLength="136" lengthAdjust="spacingAndGlyphs">kingdom</text>
              <text class="name small" x="1" y="93" textLength="60" lengthAdjust="spacingAndGlyphs">Jobs</text><path d="M77 74v17M69 82.500h16" stroke="#33a857" stroke-width="3"/><text class="name small" x="90" y="93" textLength="131" lengthAdjust="spacingAndGlyphs">Internship</text></svg>
            <div class="nav"><span class="link">Employers</span><span class="link">Job Seekers</span><span class="link">Internships</span><span class="link">Jobs</span>
              <div class="login">Login</div><div class="register">Register<svg class="caret" viewBox="0 0 18 9"><path d="M0 0h18L9 9z" fill="#fff"/></svg></div></div>
          </div>
          <div class="hero"><h1 class="headline">Transform your dream career into an achievable reality</h1>
            <svg class="swash" viewBox="0 0 300 52"><path d="M3 30C0 34 0 39 4 40c40 2 80 12 140 12 60 0 100-9 130-17 4-4 2-10-5-10-50 10-90 17-140 15C90 36 50 34 12 30z" fill="#06a7df"/><path d="M70 31C120 27 180 22 283 1c7-3 17 0 17 6-2 5-8 6-12 7C220 33 150 38 74 42c-9 0-12-8-4-11z" fill="#06a7df" stroke="#c9ecf9" stroke-width=".8"/></svg></div>
          <h2 class="section">Top Jobs and Internships</h2>
          <div class="cards">${jobs.map(j => html`<job-card .job=${j}></job-card>`)}</div>
          <div class="pager"><div class="round"><svg viewBox="0 0 14 28"><path d="M13 1.500 1.500 14 13 26.500" fill="none" stroke="#b9b9b9" stroke-width="2"/></svg></div>
            <div class="track"><div class="fill"></div></div>
            <div class="round"><svg viewBox="0 0 14 28"><path d="M1 1.500 12.500 14 1 26.500" fill="none" stroke="#111" stroke-width="2.200"/></svg></div></div>
        </div>
        <div class="shade"></div>
      </div></div>
      <mac-dock></mac-dock>
      <svg class="cursor" viewBox="0 0 26 42"><path d="M3 2v31l7-6.500 5.500 12.500 5.500-2.500-5.500-12H25z" fill="#050505" stroke="#fff" stroke-width="2"/></svg>`;
  }
}
